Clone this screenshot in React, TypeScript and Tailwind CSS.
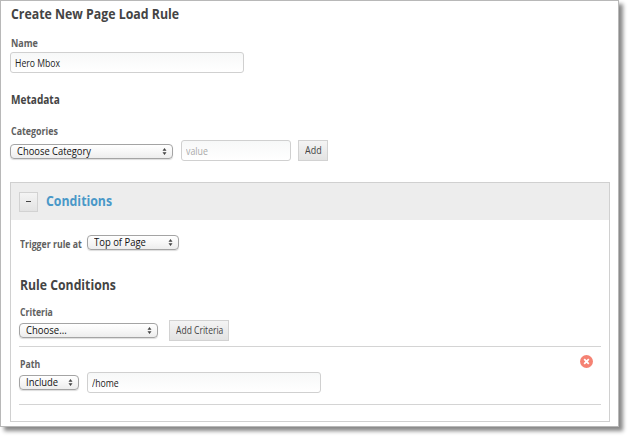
import { useLayoutEffect, useRef, useState, type ReactNode } from "react";

// Condenses a line of text so that it occupies exactly `width` pixels.
function Fit({ width, children, className = "" }: { width: number; children: ReactNode; className?: string }) {
  const ref = useRef<HTMLSpanElement>(null);
  const [scale, setScale] = useState(1);
  useLayoutEffect(() => {
    if (ref.current) setScale(width / ref.current.offsetWidth);
  }, [width]);
  return (
    <span className={`block shrink-0 ${className}`} style={{ width }}>
      <span ref={ref} className="inline-block origin-left whitespace-nowrap" style={{ transform: `scaleX(${scale})` }}>
        {children}
      </span>
    </span>
  );
}

function Select({ children, textWidth, className }: { children: ReactNode; textWidth: number; className: string }) {
  return (
    <button
      className={`flex h-[15px] items-center justify-between rounded-[4px] border border-[#a4a4a4] bg-linear-to-b from-white via-[#f7f7f7] to-[#ededed] pr-[5px] pl-[6px] text-left text-[10px] leading-[13px] font-medium text-[#111] shadow-[0_1px_1px_#ddd] ${className}`}
    >
      <Fit width={textWidth}>{children}</Fit>
      <svg className="h-[7px] w-[5px] shrink-0" viewBox="0 0 5 7" fill="#444">
        <path d="M2.5 0 4.5 2.7h-4zM2.5 7 .5 4.3h4z" />
      </svg>
    </button>
  );
}

function Field({ children, textWidth, className }: { children: string; textWidth: number; className: string }) {
  return (
    <div
      role="textbox"
      className={`h-[21px] rounded-[3px] border border-[#d0d0d0] bg-linear-to-b from-[#f7f8f8] to-white px-1 pt-[3px] text-[10px] leading-[14px] ${className}`}
    >
      <Fit width={textWidth}>{children}</Fit>
    </div>
  );
}

function Label({ children, width, className = "" }: { children: string; width: number; className?: string }) {
  return (
    <label className={`block pl-px text-[10px] leading-[13px] font-bold text-[#606060] ${className}`}>
      <Fit width={width}>{children}</Fit>
    </label>
  );
}

function Button({ children, className }: { children: ReactNode; className: string }) {
  return (
    <button
      className={`flex items-center justify-center border border-[#d2d2d2] bg-linear-to-b from-[#f4f4f4] to-[#e3e3e3] text-[10px] text-[#444] ${className}`}
    >
      {children}
    </button>
  );
}

export default function App() {
  return (
    <div className="h-[436px] w-[628px] overflow-hidden bg-white font-['Open_Sans',sans-serif]">
      <main className="h-[427px] w-[619px] border border-[#b8b8b8] bg-white pl-[9px] text-[#444] shadow-[4px_4px_4px_#888]">
        <h1 className="h-[36px] pt-[4px] pl-px text-[13.5px] leading-[19px] font-bold">
          <Fit width={168}>Create New Page Load Rule</Fit>
        </h1>
        <Label width={27} className="h-[15px]">Name</Label>
        <Field textWidth={45} className="w-[234px] text-[#222]">Hero Mbox</Field>
        <h2 className="h-[51px] pt-[19px] pl-px text-[11.5px] leading-[16px] font-bold">
          <Fit width={49}>Metadata</Fit>
        </h2>
        <Label width={47} className="h-[16px] pt-px">Categories</Label>
        <div className="flex h-[22px] items-start">
          <Select textWidth={74} className="mt-[4px] w-[163px]">Choose Category</Select>
          <Field textWidth={22} className="ml-2 w-[110px] text-[#aaa]">value</Field>
          <Button className="ml-[7px] h-[21px] w-[30px]">
            <Fit width={17}>Add</Fit>
          </Button>
        </div>
        <section className="mt-[20px] h-[240px] w-[600px] border border-[#d0d0d0]">
          <header className="flex h-[37px] items-center bg-[#ededed] pl-2">
            <Button className="h-[20px] w-[19px]">
              <span className="h-px w-[5px] bg-[#444]" />
            </Button>
            <h2 className="-mt-px ml-[8px] text-[14px] leading-[20px] font-bold text-[#4998c8]">
              <Fit width={66}>Conditions</Fit>
            </h2>
          </header>
          <div className="px-2">
            <div className="flex h-[46px] items-center pb-px">
              <Label width={62} className="w-[68px] pt-[3px]">Trigger rule at</Label>
              <Select textWidth={52} className="w-[92px]">Top of Page</Select>
            </div>
            <h2 className="h-[40px] pt-[9px] pl-px text-[13.5px] leading-[20px] font-bold">
              <Fit width={96}>Rule Conditions</Fit>
            </h2>
            <Label width={33} className="h-[14px]">Criteria</Label>
            <div className="flex h-[27px] w-[582px] items-center border-b border-[#d4d4d4] pb-[5px]">
              <Select textWidth={41} className="w-[139px]">Choose...</Select>
              <Button className="ml-[11px] h-[21px] w-[60px]">
                <Fit width={47}>Add Criteria</Fit>
              </Button>
            </div>
            <div className="h-[58px] w-[582px] border-b border-[#d4d4d4]">
              <div className="flex h-[25px] items-start justify-between pt-[8px] pr-2">
                <Label width={20} className="pt-[3px]">Path</Label>
                <svg className="h-[13px] w-[13px]" viewBox="0 0 13 13">
                  <circle cx="6.5" cy="6.5" r="6.5" fill="#f58273" />
                  <path d="m4.2 4.2 4.6 4.6m0-4.6L4.2 8.8" stroke="white" strokeWidth="1.8" />
                </svg>
              </div>
              <div className="flex items-center">
                <Select textWidth={32} className="w-[60px]">Include</Select>
                <Field textWidth={27} className="ml-2 w-[234px] text-[#222]">/home</Field>
              </div>
            </div>
          </div>
        </section>
      </main>
    </div>
  );
}
